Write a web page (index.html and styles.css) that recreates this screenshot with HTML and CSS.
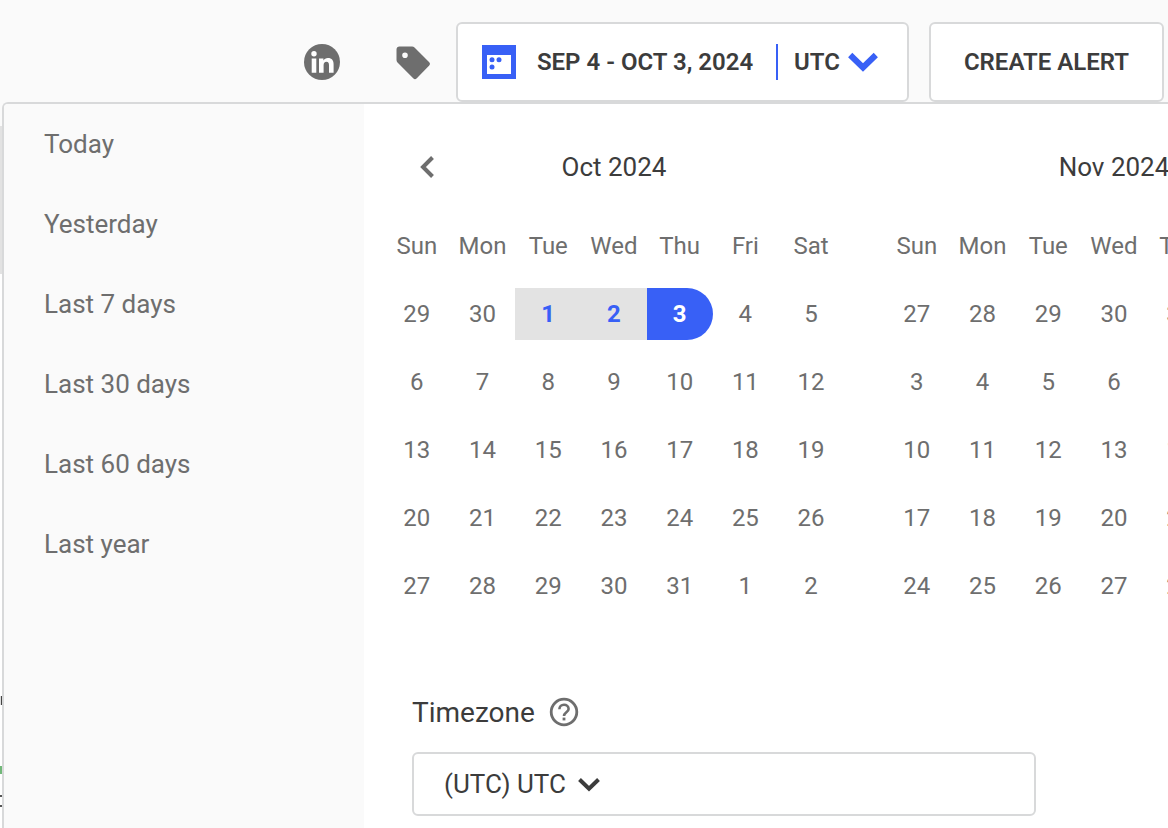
FILE: index.html
```
<!DOCTYPE html>
<html lang="en">
<head>
<meta charset="utf-8">
<meta name="viewport" content="width=device-width, initial-scale=1">
<title>Date range</title>
<link rel="stylesheet" href="styles.css">
</head>
<body>
<header class="toolbar">
  <button class="icon-button" type="button" aria-label="LinkedIn">
    <svg width="36" height="36" viewBox="0 0 36 36"><circle cx="18" cy="18" r="18" fill="#6e6e6e"/><g fill="#fff"><circle cx="10" cy="9.800" r="2.700"/><path d="M7.700 14.500h4.600V28.700H7.700zM15 14.500h4.400v2c.9-1.500 2.500-2.400 4.500-2.400 4.100 0 5.700 2.400 5.700 6.500v8.100H25v-7.500c0-2.100-.6-3.400-2.500-3.400-2 0-2.900 1.400-2.900 3.500v7.400H15z"/></g></svg>
  </button>
  <button class="icon-button" type="button" aria-label="Tags">
    <svg width="36" height="36" viewBox="0 0 36 36"><path fill="#6e6e6e" fill-rule="evenodd" d="M4.500 2.500H17c1 0 1.800.4 2.500 1L34 18.100c1.300 1.200 1.300 2.500 0 3.700L21.800 34.300c-1.200 1.200-2.400 1.200-3.600 0L2.500 18.500c-.7-.7-1-1.500-1-2.500V5.500c0-1.800 1.200-3 3-3zm5.500 6a2.800 2.800 0 1 0 0 5.600 2.800 2.800 0 0 0 0-5.600z"/></svg>
  </button>
  <button class="button date-button" type="button">
    <svg width="34" height="34" viewBox="0 0 34 34"><path fill="#3860f6" fill-rule="evenodd" d="M0 0h34v34H0zM5 10v19h24V10z"/><g fill="#3860f6"><circle cx="10" cy="14.700" r="2.500"/><circle cx="17" cy="14.700" r="2.500"/><circle cx="10" cy="22" r="2.500"/></g></svg>
    <span class="date-range">SEP 4 - OCT 3, 2024</span>
    <span class="date-zone">UTC
      <svg width="30" height="20" viewBox="0 0 30 20"><path fill="none" stroke="#3860f6" stroke-width="6" d="M2.200 3l12.800 12.500L27.800 3"/></svg>
    </span>
  </button>
  <button class="button alert-button" type="button">CREATE ALERT</button>
</header>
<main class="content">
  <div class="page-edge" aria-hidden="true">
    <i class="edge-top"></i><i class="edge-band"></i><i class="edge-dark"></i><i class="edge-green"></i><i class="edge-lines"></i>
  </div>
  <section class="picker">
    <nav class="presets">
      <button type="button">Today</button>
      <button type="button">Yesterday</button>
      <button type="button">Last 7 days</button>
      <button type="button">Last 30 days</button>
      <button type="button">Last 60 days</button>
      <button type="button">Last year</button>
    </nav>
    <div class="picker-body">
      <div class="months">
        <section class="month">
          <div class="month-head">
            <button class="previous" type="button" aria-label="Previous month"><svg width="14" height="22" viewBox="0 0 14 22"><path fill="none" stroke="#6e6e6e" stroke-width="4" d="M12.500 1.500L3 11l9.500 9.500"/></svg></button>
            <h2>Oct 2024</h2>
          </div>
          <table>
            <thead><tr><th>Sun</th><th>Mon</th><th>Tue</th><th>Wed</th><th>Thu</th><th>Fri</th><th>Sat</th></tr></thead>
            <tbody>
              <tr><td>29</td><td>30</td><td class="in-range">1</td><td class="in-range">2</td><td class="range-end">3</td><td>4</td><td>5</td></tr>
              <tr><td>6</td><td>7</td><td>8</td><td>9</td><td>10</td><td>11</td><td>12</td></tr>
              <tr><td>13</td><td>14</td><td>15</td><td>16</td><td>17</td><td>18</td><td>19</td></tr>
              <tr><td>20</td><td>21</td><td>22</td><td>23</td><td>24</td><td>25</td><td>26</td></tr>
              <tr><td>27</td><td>28</td><td>29</td><td>30</td><td>31</td><td>1</td><td>2</td></tr>
            </tbody>
          </table>
        </section>
        <section class="month">
          <div class="month-head"><h2>Nov 2024</h2></div>
          <table>
            <thead><tr><th>Sun</th><th>Mon</th><th>Tue</th><th>Wed</th><th>Thu</th><th>Fri</th><th>Sat</th></tr></thead>
            <tbody>
              <tr><td>27</td><td>28</td><td>29</td><td>30</td><td>31</td><td>1</td><td>2</td></tr>
              <tr><td>3</td><td>4</td><td>5</td><td>6</td><td>7</td><td>8</td><td>9</td></tr>
              <tr><td>10</td><td>11</td><td>12</td><td>13</td><td>14</td><td>15</td><td>16</td></tr>
              <tr><td>17</td><td>18</td><td>19</td><td>20</td><td>21</td><td>22</td><td>23</td></tr>
              <tr><td>24</td><td>25</td><td>26</td><td>27</td><td>28</td><td>29</td><td>30</td></tr>
            </tbody>
          </table>
        </section>
      </div>
      <div class="timezone">
        <div class="timezone-label">
          <label for="timezone">Timezone</label>
          <svg width="30" height="30" viewBox="0 0 30 30" fill="none" stroke="#6e6e6e"><circle cx="15" cy="15" r="12.800" stroke-width="2.800"/><path stroke-width="2.600" d="M10.400 12.200c0-2.800 2-4.500 4.600-4.500s4.600 1.700 4.600 4.200c0 3.400-4.600 3.500-4.600 7.200"/><path stroke-width="2.800" d="M15 20.600v2.800"/></svg>
        </div>
        <div class="select-box">
          <select id="timezone"><option>(UTC) UTC</option></select>
          <svg width="22" height="14" viewBox="0 0 22 14"><path fill="none" stroke="#3c3c3c" stroke-width="4" d="M1.500 1.500L11 10.700 20.500 1.500"/></svg>
        </div>
      </div>
    </div>
  </section>
</main>
</body>
</html>
```
FILE: styles.css
```
* { box-sizing: border-box; }

body {
  margin: 0;
  min-height: 100vh;
  display: flex;
  flex-direction: column;
  overflow: hidden;
  background: #fff;
  color: #3c3c3c;
  font-family: Roboto, "Liberation Sans", sans-serif;
  font-size: 26px;
}

button, select { font: inherit; color: inherit; cursor: pointer; }
button { border: 0; padding: 0; background: none; }
svg { display: block; flex: none; }

.toolbar {
  display: flex;
  align-items: center;
  justify-content: flex-end;
  padding: 22px 4px 0 0;
  background: #fafafa;
}

.icon-button { margin-right: 55px; }
.icon-button + .icon-button { margin-right: 25px; }

.button {
  display: flex;
  align-items: center;
  height: 80px;
  border: 2px solid #d8d9da;
  border-radius: 6px;
  background: #fff;
  font-size: 24px;
  font-weight: 600;
  white-space: nowrap;
}

.date-button { padding: 0 29px 0 24px; gap: 18px; }
.date-range { min-width: 222px; }
.alert-button { margin-left: 20px; padding: 0 33px; }

.date-zone {
  display: flex;
  align-items: center;
  gap: 8px;
  height: 36px;
  margin-left: 2px;
  padding-left: 16px;
  border-left: 2px solid #3860f6;
}

.content { flex: 1; display: flex; background: linear-gradient(#fafafa 24px, #fff 24px); }

.page-edge { display: flex; flex-direction: column; flex: none; width: 2px; }
.edge-top { height: 24px; background: #fafafa; }
.edge-band { height: 148px; background: #e2e2e2; }
.edge-dark { height: 9px; margin-top: 422px; background: linear-gradient(90deg, #ddd 50%, #444 50%); }
.edge-green { height: 8px; margin-top: 61px; background: #72b879; }
.edge-lines { height: 12px; margin-top: 21px; border: solid #555; border-width: 2px 0; }

.picker {
  flex: 1;
  min-width: 0;
  display: flex;
  overflow: hidden;
  border: solid #d8d9da;
  border-width: 2px 0 0 2px;
  border-top-left-radius: 6px;
  background: #fff;
}

.presets {
  flex: none;
  width: 360px;
  display: flex;
  flex-direction: column;
  background: #fafafa;
  color: #6e6e6e;
}
.presets button { height: 80px; padding: 0 40px; text-align: left; }

.picker-body { flex: 1; min-width: 0; padding: 40px 20px 12px; }
.months { display: flex; gap: 40px; }
.month { flex: none; width: 460px; }

.month-head { display: grid; grid-template-columns: 86px 1fr 86px; align-items: center; height: 46px; }
.month-head h2 { grid-column: 2; margin: 0; font-size: 26px; font-weight: 400; text-align: center; }
.previous { justify-self: center; }

table {
  width: 100%;
  margin-top: 14px;
  table-layout: fixed;
  border-spacing: 0 16px;
  color: #6e6e6e;
  font-size: 24px;
}
th, td { height: 52px; padding: 0; font-weight: 400; text-align: center; }
.in-range { background: #e3e3e3; color: #3860f6; font-weight: 700; }
.range-end { background: #3860f6; color: #fff; font-weight: 700; border-radius: 0 26px 26px 0; }

.timezone { max-width: 680px; margin-top: 68px; padding: 0 28px; }
.timezone-label { display: flex; align-items: center; gap: 14px; height: 32px; font-size: 28px; }

.select-box { position: relative; margin-top: 24px; }
.select-box select {
  width: 100%;
  height: 64px;
  padding: 0 30px;
  appearance: none;
  border: 2px solid #d8d9da;
  border-radius: 6px;
  background: #fff;
}
.select-box svg { position: absolute; left: 166px; top: 26px; pointer-events: none; }
```
